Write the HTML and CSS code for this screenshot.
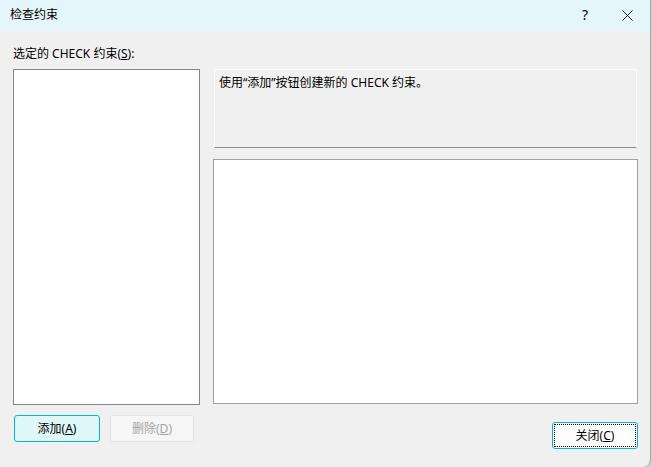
FILE: index.html
```html
<!DOCTYPE html>
<html lang="zh-CN">
<head>
    <meta charset="UTF-8">
    <title>检查约束</title>
    <link rel="stylesheet" href="styles.css">
</head>
<body>
    <div class="window">
        <div class="titlebar">
            <span class="title">检查约束</span>
            <span class="help">?</span>
            <span class="close-x">
                <svg width="11" height="11" viewBox="0 0 11 11">
                    <path d="M0.5 0.5 L10.5 10.5 M10.5 0.5 L0.5 10.5" stroke="#1a1a1a" stroke-width="1" fill="none"/>
                </svg>
            </span>
        </div>

        <div class="content">
            <div class="left-col">
                <div class="label">选定的 CHECK 约束(<u>S</u>):</div>
                <div class="listbox"></div>
                <div class="btn-row">
                    <button class="btn btn-primary">添加(<u>A</u>)</button>
                    <button class="btn btn-disabled">删除(<u>D</u>)</button>
                </div>
            </div>

            <div class="right-col">
                <div class="desc">使用“添加”按钮创建新的 CHECK 约束。</div>
                <div class="propgrid"></div>
                <div class="footer">
                    <button class="btn btn-focus">关闭(<u>C</u>)</button>
                </div>
            </div>
        </div>
    </div>
</body>
</html>
```

FILE: styles.css
```css
html, body {
    margin: 0;
    padding: 0;
    background: #cfcfcf;
}

body {
    font-family: "Noto Sans", "Noto Sans CJK SC", sans-serif;
    font-size: 12px;
    color: #000;
}

.window {
    width: 650px;
    height: 467px;
    background: #f0f0f0;
    border-right: 1px solid #a8a8a8;
    border-bottom-right-radius: 8px;
    display: flex;
    flex-direction: column;
    overflow: hidden;
}

.titlebar {
    height: 31px;
    flex-shrink: 0;
    background: #e4f6f9;
    display: flex;
    align-items: center;
    padding-left: 10px;
}

.title {
    flex: 1;
    line-height: 16px;
    margin-top: -1px;
}

.help {
    width: 10px;
    font-size: 14px;
    line-height: 16px;
    margin-right: 30px;
    margin-top: -1px;
}

.close-x {
    display: flex;
    margin-right: 17px;
    margin-top: -1px;
}

.content {
    flex: 1;
    display: flex;
    gap: 13px;
    padding: 0 12px 0 13px;
}

.left-col {
    width: 187px;
    display: flex;
    flex-direction: column;
}

.label {
    line-height: 16px;
    margin-top: 15px;
    margin-bottom: 7px;
}

.listbox {
    height: 336px;
    background: #fff;
    border: 1px solid #82878f;
    box-sizing: border-box;
}

.btn-row {
    display: flex;
    gap: 10px;
    margin-top: 10px;
    padding-left: 1px;
}

.btn {
    width: 86px;
    height: 27px;
    box-sizing: border-box;
    border-radius: 3px;
    font-family: inherit;
    font-size: 12px;
    line-height: 16px;
    padding: 0;
    color: #000;
}

.btn-primary {
    background: #e0f7f9;
    border: 1px solid #00b8c6;
}

.btn-disabled {
    width: 84px;
    background: #f6f6f6;
    border: 1px solid #e4e4e4;
    color: #a3a3a3;
}

.right-col {
    width: 425px;
    display: flex;
    flex-direction: column;
    padding-top: 38px;
}

.desc {
    height: 79px;
    box-sizing: border-box;
    margin-left: 1px;
    margin-right: 1px;
    padding: 5px 4px;
    line-height: 16px;
    background: #f0f0f0;
    border-top: 1px solid #fcfcfc;
    border-left: 1px solid #fcfcfc;
    border-right: 1px solid #fcfcfc;
    border-bottom: 1px solid #8c8c8c;
}

.propgrid {
    height: 245px;
    margin-top: 11px;
    box-sizing: border-box;
    background: #fff;
    border: 1px solid #a0a0a0;
}

.footer {
    display: flex;
    justify-content: flex-end;
    margin-top: 18px;
}

.btn-focus {
    background: #fdfdfd;
    border: 1px solid #00b8c6;
    outline: 1px dotted #000;
    outline-offset: -3px;
}
```
